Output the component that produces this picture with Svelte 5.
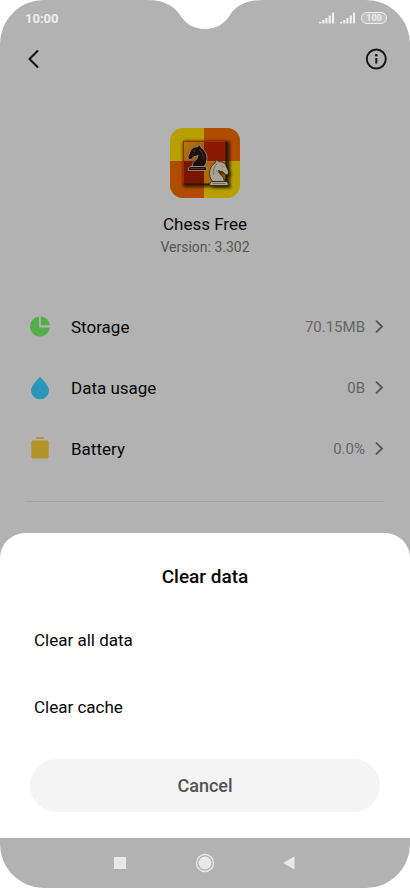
<script>
  const stats = [
    { icon: 'storage', label: 'Storage', value: '70.15MB' },
    { icon: 'data', label: 'Data usage', value: '0B' },
    { icon: 'battery', label: 'Battery', value: '0.0%' },
  ];
  const options = ['Clear all data', 'Clear cache'];
</script>

{#snippet knight()}
  <path d="M1 12 L4 5 Q6 2 11 2 L13 0 L14 3 Q20 7 20 14 Q20 19 17 22 H5 Q5 18 10 14 L11 11 Q9 12 7 12 L4 15 Q1 16 1 12Z" />
  <path d="M3 22 H18 Q20 23 20 26 H1 Q1 23 3 22Z" />
{/snippet}

<div class="screen">
  <svg class="notch" width="116" height="29" viewBox="0 0 116 29" aria-hidden="true">
    <path d="M0 0 C17 0 27 6 33 15 C39 24 47 29 58 29 C69 29 77 24 83 15 C89 6 99 0 116 0Z" fill="#fff" />
  </svg>

  <div class="status">
    <span class="time">10:00</span>
    <div class="signals">
      {#each [0, 1] as n (n)}
        <svg width="16" height="12" viewBox="0 0 16 12" aria-hidden="true">
          <path d="M1.2 9.8V11.5M4.3 8V11.5M7.4 6V11.5M10.7 3.5V11.5M14 .5V11.5" stroke="#f0f0f0" stroke-width="2.1" />
        </svg>
      {/each}
      <span class="charge">100</span>
    </div>
  </div>

  <header>
    <button class="icon-btn" aria-label="Back">
      <svg width="22" height="22" viewBox="0 0 22 22">
        <path d="M14.500 3 L6.500 11 L14.500 19" fill="none" stroke="#151515" stroke-width="2.1" stroke-linecap="round" stroke-linejoin="round" />
      </svg>
    </button>
    <button class="icon-btn" aria-label="App info">
      <svg width="22" height="22" viewBox="0 0 22 22">
        <circle cx="11.300" cy="11" r="9.5" fill="none" stroke="#151515" stroke-width="1.9" />
        <circle cx="11.300" cy="7.300" r="1.3" fill="#151515" />
        <path d="M11.300 10V15.5" stroke="#151515" stroke-width="2" />
      </svg>
    </button>
  </header>

  <main>
    <div class="app">
      <svg width="70" height="70" viewBox="0 0 70 70" role="img" aria-label="Chess Free icon">
        <defs>
          <clipPath id="tile"><rect width="70" height="70" rx="13" /></clipPath>
          <filter id="soft" x="-20%" y="-20%" width="140%" height="140%"><feGaussianBlur stdDeviation="1.4" /></filter>
          <linearGradient id="glow" x1="0" y1="0" x2="1" y2="1">
            <stop offset="0" stop-color="#b27c08" /><stop offset="1" stop-color="#a34808" />
          </linearGradient>
        </defs>
        <g clip-path="url(#tile)">
          <rect width="70" height="70" fill="#b79f00" />
          <path d="M34 0H70V33H34ZM0 33H34V70H0Z" fill="#b04c00" />
          <rect x="13" y="13" width="47" height="46" rx="2" fill="#170900" opacity=".8" filter="url(#soft)" />
          <rect x="13" y="13" width="43" height="43" rx="1" fill="#771500" />
          <path d="M34 13H56V33H34Z" fill="#8c1a00" />
          <path d="M14 14H34V33H14Z" fill="url(#glow)" />
          <path d="M34 33H56V56H34Z" fill="#b06a04" />
          <path d="M13.5 56V13.5H56" fill="none" stroke="#b02c00" stroke-width=".8" />
          <path d="M56 13.5V56H13.5" fill="none" stroke="#3a0a00" stroke-width="1.2" />
          <g transform="translate(17 16.5)" fill="#1c100c" stroke="#a5958a" stroke-width=".8" stroke-linejoin="round">
            {@render knight()}
            <path d="M12 5Q17 8 16 15M6 7L8 6.500M4 24H17" fill="none" stroke="#5b4136" />
          </g>
          <g transform="translate(62 34)" opacity=".6" filter="url(#soft)"><g transform="scale(-1 1)" fill="#100800">{@render knight()}</g></g>
          <g transform="translate(59.500 31.500) scale(-1 1)" fill="#aaa393" stroke="#302319" stroke-width=".8" stroke-linejoin="round">
            {@render knight()}
            <path d="M12 4Q17 8 16 15M6 7L8 6.500M10 14L13 11M4 24H17" fill="none" stroke="#6a6052" />
          </g>
        </g>
      </svg>
      <h1>Chess Free</h1>
      <p>Version: 3.302</p>
    </div>

    <div class="stats">
      {#each stats as s (s.label)}
        <button class="stat">
          <svg width="22" height="24" viewBox="0 0 22 24" aria-hidden="true">
            {#if s.icon === 'storage'}
              <path d="M10 1.600A10 10 0 1 0 20.900 12.500H10Z" fill="#55ad4c" />
              <path d="M11.800 1.600V10.200H20.900A10 10 0 0 0 11.800 1.600Z" fill="#55ad4c" />
            {:else if s.icon === 'data'}
              <path d="M11 1C9.500 2.500 2 9.500 2 14.500A9 8.700 0 0 0 20 14.500C20 9.500 12.500 2.500 11 1Z" fill="#2a96b8" />
            {:else}
              <rect x="7" y="0" width="8" height="2" rx=".6" fill="#b1942a" />
              <rect x="2.300" y="3.500" width="17.400" height="18" rx="2" fill="#b1942a" />
            {/if}
          </svg>
          <span class="label">{s.label}</span>
          <span class="value">{s.value}</span>
          <svg width="10" height="14" viewBox="0 0 10 14" aria-hidden="true">
            <path d="M2 .700L8 6.500L2 12.300" fill="none" stroke="#555" stroke-width="1.800" />
          </svg>
        </button>
      {/each}
    </div>
    <hr />
  </main>

  <div class="sheet" role="dialog" aria-labelledby="sheet-title">
    <h2 id="sheet-title">Clear data</h2>
    <div class="options">
      {#each options as option (option)}
        <button class="option">{option}</button>
      {/each}
    </div>
    <button class="cancel">Cancel</button>
  </div>

  <nav>
    <button aria-label="Recent apps">
      <svg width="20" height="20" viewBox="0 0 20 20"><rect x="3" y="4" width="12" height="12" fill="#e8e8e8" /></svg>
    </button>
    <button aria-label="Home">
      <svg width="20" height="20" viewBox="0 0 20 20">
        <circle cx="10" cy="10" r="8.500" fill="none" stroke="#e8e8e8" stroke-width="1.300" />
        <circle cx="10" cy="10" r="6.500" fill="#e8e8e8" />
      </svg>
    </button>
    <button aria-label="Back">
      <svg width="20" height="20" viewBox="0 0 20 20"><path d="M4 10L15.500 3.500V16.500Z" fill="#e8e8e8" /></svg>
    </button>
  </nav>
</div>

<style>
  :global(body) {
    margin: 0;
    background: #fff;
  }
  .screen {
    position: relative;
    box-sizing: border-box;
    display: flex;
    flex-direction: column;
    min-height: 100vh;
    overflow: hidden;
    border-radius: 44px;
    background: #b2b2b2;
    color: #060606;
    font-family: Roboto, "Liberation Sans", sans-serif;
  }
  button {
    margin: 0;
    padding: 0;
    border: 0;
    background: none;
    color: inherit;
    font: inherit;
    cursor: pointer;
  }
  svg {
    display: block;
    flex: none;
  }
  .notch {
    position: absolute;
    top: 0;
    left: 50%;
    transform: translateX(-50%);
  }
  .status {
    display: flex;
    align-items: center;
    justify-content: space-between;
    height: 36px;
    padding: 0 23px 0 25px;
    color: #eee;
  }
  .time {
    font-size: 13px;
    font-weight: 700;
  }
  .signals {
    display: flex;
    align-items: center;
    gap: 5px;
  }
  .charge {
    box-sizing: border-box;
    width: 26px;
    height: 12px;
    border: 1px solid #eee;
    border-radius: 6px;
    background: #bebebe;
    font-size: 9px;
    font-weight: 700;
    line-height: 10px;
    text-align: center;
  }
  header {
    display: flex;
    align-items: center;
    justify-content: space-between;
    height: 46px;
    padding: 0 23px;
  }
  main {
    flex: 1;
    padding: 46px 26px 31px;
  }
  .app {
    display: flex;
    flex-direction: column;
    align-items: center;
  }
  h1 {
    margin: 14px 0 0;
    font-size: 17px;
    font-weight: 400;
    line-height: 24px;
  }
  p {
    margin: 1px 0 0;
    color: #555;
    font-size: 14px;
    line-height: 20px;
  }
  .stats {
    margin-top: 39px;
  }
  .stat {
    display: flex;
    align-items: center;
    width: 100%;
    height: 61px;
    padding: 0 0 0 3px;
    font-size: 17px;
    text-align: left;
  }
  .label {
    flex: 1;
    margin-left: 20px;
  }
  .value {
    margin-right: 9px;
    color: #666;
    font-size: 15px;
  }
  hr {
    height: 1px;
    margin: 22px 0 0;
    border: 0;
    background: #a3a3a3;
  }
  .sheet {
    padding: 32px 30px 26px;
    border-radius: 25px 25px 0 0;
    background: #fff;
  }
  h2 {
    margin: 0;
    font-size: 19px;
    font-weight: 500;
    line-height: 24px;
    text-align: center;
  }
  .options {
    margin: 17px 0 19px;
  }
  .option {
    display: block;
    width: 100%;
    height: 67px;
    padding: 0 4px;
    font-size: 17px;
    text-align: left;
  }
  .cancel {
    width: 100%;
    height: 53px;
    border-radius: 27px;
    background: #f4f4f4;
    color: #555;
    font-size: 18px;
    font-weight: 500;
  }
  nav {
    display: flex;
    align-items: center;
    justify-content: center;
    gap: 64px;
    height: 50px;
  }
</style>
